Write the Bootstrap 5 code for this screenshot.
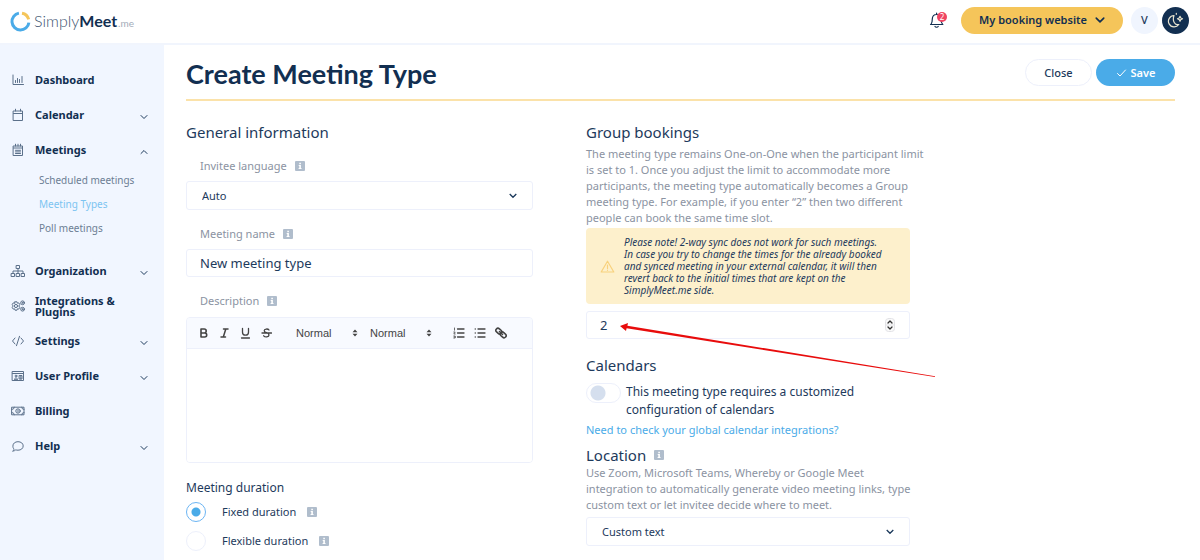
<!DOCTYPE html>
<html lang="en">
<head>
<meta charset="utf-8">
<meta name="viewport" content="width=device-width, initial-scale=1">
<title>Create Meeting Type</title>
<link href="https://cdn.jsdelivr.net/npm/bootstrap@5.3.0/dist/css/bootstrap.min.css" rel="stylesheet">
<style>
  :root { --ink: #1d3a5c; --navy: #122f51; --muted: #8b93a2; --line: #edf0fb; --sky: #4aabe8; --mist: #f1f6ff; }
  body { font-family: "Noto Sans", sans-serif; font-size: 11px; line-height: 16px; color: var(--ink); background: #fff; }
  svg { display: block; flex: none; }
  button, input, select, textarea { font-family: inherit; }
  .ico { fill: none; stroke: currentColor; stroke-linecap: round; stroke-linejoin: round; }

  .topbar { height: 45px; border-bottom: 2px solid #f1f5fd; padding: 0 11px 3px 10px; }
  .brand { font-family: Lato, sans-serif; font-size: 16px; line-height: 24px; color: #3c536f; font-weight: 300; text-decoration: none; gap: 3px; padding-top: 3px; }
  .brand b { font-weight: 700; color: var(--navy); }
  .brand small { font-size: 10px; font-weight: 400; color: #a3acb9; padding-left: 1px; }
  .pill { height: 27px; border-radius: 14px; font-size: 11px; font-weight: 600; line-height: 16px; padding: 0; }
  .pill-site { background: #f5c55a; color: var(--navy); width: 162px; }
  .pill-site:hover { background: #eebb48; }
  .pill-close { width: 67px; border: 1px solid var(--line); color: var(--ink); font-weight: 500; }
  .pill-save { width: 79px; background: var(--sky); color: #fff; }
  .head-actions { margin-top: 2px; }
  .round { width: 27px; height: 27px; border-radius: 50%; border: 0; padding: 0; font-size: 11px; font-weight: 500; background: #f0f5fe; color: var(--ink); }
  .round-dark { background: #122f51; color: #e8e4d0; }
  .bell { width: 16px; border: 0; background: none; padding: 0; color: var(--navy); }
  .bell-count { top: 0; left: 8px; width: 10px; height: 10px; border-radius: 50%; background: #ef4562; color: #fff; font-size: 8px; line-height: 10px; }

  .side { width: 164px; background: var(--mist); padding: 18px 16px 0 10px; }
  .side-link { height: 35px; color: var(--navy); font-weight: 700; font-size: 11px; line-height: 11px; text-decoration: none; gap: 9px; padding-bottom: 2px; }
  .side-link .ico { color: #5b708a; }
  .side-link .caret { color: var(--ink); margin-top: 4px; }
  .sub { padding-bottom: 14px; font-size: 10px; }
  .sub a { display: block; color: #6c7e94; line-height: 24px; padding-left: 29px; text-decoration: none; }
  .sub a.current { color: #7cc4f1; }

  .page { padding: 12px 25px 0 22px; }
  .page-head { height: 44px; border-bottom: 2px solid #fbe2a9; }
  .page-title { font-family: Lato, sans-serif; font-weight: 700; font-size: 27px; line-height: 34px; color: var(--navy); }
  .form-cols { display: grid; grid-template-columns: 347fr 324fr 212fr; column-gap: 53px; padding-top: 21px; }
  .sec { font-size: 15px; line-height: 20px; font-weight: 400; margin: 0; color: var(--ink); }
  .hint { color: var(--muted); margin: 0 -6px 0 0; }
  .hint-wide { margin-right: -16px; }
  .lbl { color: var(--muted); padding-left: 14px; gap: 8px; height: 16px; }
  .box { display: block; width: 100%; height: 28px; border: 1px solid var(--line); border-radius: 3px; color: var(--ink); background-color: #fff; padding: 0 13px; font-size: 13px; line-height: 18px; }
  .lbl + .box, .limit { margin-top: 7px; }
  select.box { appearance: none; height: 29px; font-size: 11px; padding: 0 15px;
    background: #fff url("data:image/svg+xml,%3Csvg xmlns='http://www.w3.org/2000/svg' width='8' height='6' fill='none' stroke='%231d3a5c' stroke-width='1.3'%3E%3Cpath d='M.7 1 4 4.300 7.300 1'/%3E%3C/svg%3E") no-repeat right 15px center; }
  input[type=number] { appearance: textfield; -moz-appearance: textfield; }
  input::-webkit-inner-spin-button { appearance: none; -webkit-appearance: none; }
  .spin { right: 15px; top: 7px; }

  .editor { border: 1px solid var(--line); border-radius: 4px; margin-top: 8px; overflow: hidden; }
  .tools { height: 31px; background: #f8faff; border-bottom: 1px solid var(--line); padding: 0 26px 0 11px; color: #444; }
  .tools button { border: 0; background: none; padding: 0; width: 11px; color: #444; }
  .tools select { appearance: none; border: 0; width: 62px; margin-right: 12px; padding: 0; color: #444; font: 500 11px/16px "Liberation Sans", sans-serif;
    background: url("data:image/svg+xml,%3Csvg xmlns='http://www.w3.org/2000/svg' width='6' height='8' fill='%23444'%3E%3Cpath d='M.5 3.300 3 .6 5.500 3.300zM.5 4.700 3 7.400 5.500 4.700z'/%3E%3C/svg%3E") no-repeat right center; }
  .tool-set { gap: 10px; }
  .editor textarea { display: block; width: 100%; height: 113px; border: 0; resize: none; padding: 10px 13px; color: var(--ink); outline: 0; }
  .mid { font-size: 12px; line-height: 18px; }
  .pick { appearance: none; width: 20px; height: 20px; border: 1px solid var(--line); border-radius: 50%; margin: 0 16px 0 0; background: #fff; flex: none; }
  .pick:checked { border-color: #6cb5f3; background: radial-gradient(circle, var(--sky) 0 4px, #fff 5px); }
  .choices { display: grid; gap: 9px; margin-top: 5px; }
  .choices svg { margin-left: 11px; }
  .note { background: #fdf0cc; border-radius: 4px; padding: 8px 26px 8px 14px; gap: 9px; font-size: 10px; line-height: 12px; font-style: italic; margin-top: 2px; }
  .note svg { color: #f8d17c; }
  .toggle-row { gap: 5px; margin-top: 8px; }
  .toggle { appearance: none; width: 35px; height: 20px; border: 1px solid var(--line); border-radius: 10px; background: radial-gradient(circle at 11px 9px, #d5dfee 0 7px, #fff 8px); flex: none; margin: 0; }
  .pointer { left: 34px; top: 11px; pointer-events: none; }
  .more { color: var(--sky); text-decoration: none; margin: 3px 0 7px; }
</style>
</head>
<body class="min-vh-100 d-flex flex-column">
<svg width="0" height="0" class="position-absolute" aria-hidden="true">
  <symbol id="info" viewBox="0 0 10 10"><rect width="10" height="10" rx="1" fill="#b0bdcc"/><path d="M4.300 1.800h1.600v1.400H4.300zM3.700 4.100h2.200v3h.6v1H3.600v-1h.7V5.100h-.6z" fill="#fff"/></symbol>
  <symbol id="down" viewBox="0 0 8 6"><path d="M1 1.500 4 4.500 7 1.500"/></symbol>
  <symbol id="up" viewBox="0 0 8 6"><path d="M1 4.500 4 1.500 7 4.500"/></symbol>
</svg>

<header class="topbar d-flex align-items-center">
  <a class="brand d-flex align-items-center" href="#">
    <svg width="21" height="21" viewBox="0 0 21 21" fill="none" stroke-width="3"><path d="M8.900 2.150A8.500 8.500 0 1 0 18.900 11.600" stroke="#4aabe8"/><path d="M12 2.150A8.500 8.500 0 0 1 18.700 8.300" stroke="#f5c55a"/></svg>
    <span>Simply<b>Meet</b><small>.me</small></span>
  </a>
  <div class="ms-auto d-flex align-items-center">
    <button class="bell position-relative me-3" type="button" aria-label="Notifications">
      <svg class="ico" width="16" height="17" viewBox="0 0 16 17" stroke-width="1.200"><path d="M1.500 12.500h12.400M2 12.300c1.300-1.400 1.300-3 1.300-5.300C3.300 4 5 2.500 7.600 2.500S12 4 12 7c0 2.300.2 3.900 1.600 5.300M7.600 1.200v1.300M6 14.500c.6 1 2.600 1 3.200 0"/></svg>
      <span class="bell-count position-absolute">2</span>
    </button>
    <button class="btn pill pill-site d-flex align-items-center justify-content-center gap-2 me-2" type="button">My booking website
      <svg class="ico" width="10" height="8" viewBox="0 0 8 6" stroke-width="1.300"><use href="#down"/></svg></button>
    <button class="round me-1" type="button">V</button>
    <button class="round round-dark d-flex align-items-center justify-content-center" type="button" aria-label="Dark mode">
      <svg class="ico" width="17" height="17" viewBox="0 0 17 17" stroke-width="1.200"><path d="M7 3.500a5.700 5.700 0 1 0 4.800 9C8 13.500 5 9 7 3.500zM13 4.300l.8 1.700 1.700.8-1.700.8-.8 1.700-.8-1.700-1.700-.8 1.700-.8zM9.300 1.300v1"/></svg></button>
  </div>
</header>

<div class="d-flex flex-grow-1">
  <nav class="side flex-shrink-0">
    <a class="side-link d-flex align-items-center" href="#"><svg class="ico" width="16" height="14" viewBox="0 0 16 14"><path d="M3 2v9.500h10.500M5.500 9.500v-2M7.500 9.500V5.500M9.500 9.500v-3M12 9.500V3.500"/></svg>Dashboard</a>
    <a class="side-link d-flex align-items-center" href="#"><svg class="ico" width="16" height="14" viewBox="0 0 16 14"><path d="M3.500 3h9v9.500h-9zM3.500 5.500h9M5.500 1.200V3M10.500 1.200V3"/></svg>Calendar<svg class="ico caret ms-auto" width="8" height="6"><use href="#down"/></svg></a>
    <a class="side-link d-flex align-items-center" href="#"><svg class="ico" width="16" height="14" viewBox="0 0 16 14"><path d="M3.500 3h9v9.500h-9zM3.500 5h9M5.500 1.200V3M8 1.200V3M10.500 1.200V3M5.500 7.300h5M5.500 8.900h5M5.500 10.500h5"/></svg>Meetings<svg class="ico caret ms-auto" width="8" height="6"><use href="#up"/></svg></a>
    <div class="sub">
      <a href="#">Scheduled meetings</a>
      <a href="#" class="current">Meeting Types</a>
      <a href="#">Poll meetings</a>
    </div>
    <a class="side-link d-flex align-items-center" href="#"><svg class="ico" width="16" height="14" viewBox="0 0 16 14"><path d="M6.500 1.500h3v3h-3zM1.500 9.500h3v3h-3zM6.500 9.500h3v3h-3zM11.500 9.500h3v3h-3zM8 4.500v5M3 9.500V7h10v2.500"/></svg>Organization<svg class="ico caret ms-auto" width="8" height="6"><use href="#down"/></svg></a>
    <a class="side-link d-flex align-items-center" href="#"><svg class="ico" width="16" height="14" viewBox="0 0 16 14"><path d="M5 2.800h2l.4 1.400 1.400-.3 1 1.700-1 1.400 1 1.400-1 1.700-1.400-.3L7 11.200H5l-.4-1.400-1.400.3-1-1.700 1-1.400-1-1.400 1-1.700 1.400.3z"/><circle cx="6" cy="7" r="1.600"/><circle cx="12.600" cy="3.800" r="1.900"/><circle cx="12.600" cy="3.800" r=".5"/><circle cx="12.600" cy="10.200" r="1.900"/><circle cx="12.600" cy="10.200" r=".5"/></svg>Integrations &amp; Plugins</a>
    <a class="side-link d-flex align-items-center" href="#"><svg class="ico" width="16" height="14" viewBox="0 0 16 14"><path d="M5 4 2.500 7 5 10M11 4l2.500 3L11 10M9.500 2.300l-3 9.400"/></svg>Settings<svg class="ico caret ms-auto" width="8" height="6"><use href="#down"/></svg></a>
    <a class="side-link d-flex align-items-center" href="#"><svg class="ico" width="16" height="14" viewBox="0 0 16 14"><path d="M2.500 2.500h11v9h-11zM2.500 4.500h11M4.500 10.300c0-2 3-2 3 0zM9.500 6.500h2.500v3.500H9.500zM10.800 6.500v3.500"/><circle cx="6" cy="7" r=".9"/></svg>User Profile<svg class="ico caret ms-auto" width="8" height="6"><use href="#down"/></svg></a>
    <a class="side-link d-flex align-items-center" href="#"><svg class="ico" width="16" height="14" viewBox="0 0 16 14"><path d="M2 3.200h12v7.600H2zM2 5.500A2.300 2.300 0 0 0 4.300 3.200M14 5.500a2.300 2.300 0 0 1-2.300-2.300M2 8.500a2.300 2.300 0 0 1 2.300 2.300M14 8.500a2.300 2.300 0 0 0-2.300 2.300M8 6v2"/><circle cx="8" cy="7" r="2.200"/></svg>Billing</a>
    <a class="side-link d-flex align-items-center" href="#"><svg class="ico" width="16" height="14" viewBox="0 0 16 14"><path d="M3 12c.9-.8 1-1.300 1-2C3 9 2.900 8 2.900 7c0-2.600 2.200-4.300 5.100-4.300S13.200 4.400 13.200 6.900 11 11.200 8 11.200c-.9 0-1.500-.1-2.200-.4C5 11.500 4.200 12 3 12z"/></svg>Help<svg class="ico caret ms-auto" width="8" height="6"><use href="#down"/></svg></a>
  </nav>

  <main class="page flex-grow-1">
    <div class="page-head d-flex align-items-start">
      <h1 class="page-title m-0">Create Meeting Type</h1>
      <div class="head-actions ms-auto d-flex gap-1">
        <button class="btn pill pill-close" type="button">Close</button>
        <button class="btn pill pill-save d-flex align-items-center justify-content-center gap-1" type="button"><svg class="ico" width="11" height="10" viewBox="0 0 11 10"><path d="M1.500 5.500 4 8 9.500 2"/></svg>Save</button>
      </div>
    </div>

    <form class="form-cols">
      <div>
        <h2 class="sec mb-3">General information</h2>
        <label class="lbl d-flex align-items-center" for="lang">Invitee language<svg width="10" height="10"><use href="#info"/></svg></label>
        <select class="box mb-3" id="lang"><option>Auto</option></select>
        <label class="lbl d-flex align-items-center" for="mname">Meeting name<svg width="10" height="10"><use href="#info"/></svg></label>
        <input class="box mb-3" id="mname" type="text" value="New meeting type">
        <label class="lbl d-flex align-items-center" for="desc">Description<svg width="10" height="10"><use href="#info"/></svg></label>
        <div class="editor">
          <div class="tools d-flex align-items-center">
            <div class="tool-set d-flex me-4">
              <button type="button" aria-label="Bold"><svg class="ico" width="11" height="12" viewBox="0 0 11 12" stroke-width="1.600"><path d="M3 2h3.200a2 2 0 0 1 0 4H3zM3 6h3.700a2 2 0 0 1 0 4H3z"/></svg></button>
              <button type="button" aria-label="Italic"><svg class="ico" width="11" height="12" viewBox="0 0 11 12" stroke-width="1.500"><path d="M4.500 2H9M2 10h4.500M6.800 2 4.300 10"/></svg></button>
              <button type="button" aria-label="Underline"><svg class="ico" width="11" height="12" viewBox="0 0 11 12" stroke-width="1.300"><path d="M2.500 1.500v3.700a3 3 0 0 0 6 0V1.500M1.500 11h8"/></svg></button>
              <button type="button" aria-label="Strikethrough"><svg class="ico" width="11" height="12" viewBox="0 0 11 12" stroke-width="1.300"><path d="M8 3C7 1.500 3.200 1.700 3.200 3.700 3.200 6.300 8 5 8 8c0 2.300-4 2.500-5.300.8M1 6h9.500"/></svg></button>
            </div>
            <select aria-label="Size"><option>Normal</option></select>
            <select aria-label="Heading"><option>Normal</option></select>
            <div class="tool-set d-flex ms-auto">
              <button type="button" aria-label="Ordered list"><svg class="ico" width="12" height="12" viewBox="0 0 12 12" stroke-width="1.300"><path d="M4.500 2h6.500M4.500 6h6.500M4.500 10h6.500"/><path d="M1.500 1v2.200M.8 5h1.400L.8 7h1.400M.8 9h1.400v2H.8M1.200 10h1" stroke-width=".8"/></svg></button>
              <button type="button" aria-label="Bullet list"><svg class="ico" width="12" height="12" viewBox="0 0 12 12" stroke-width="1.300"><path d="M4 2h7M4 6h7M4 10h7M1.200 2h.1M1.200 6h.1M1.200 10h.1"/></svg></button>
              <button type="button" aria-label="Link"><svg class="ico" width="12" height="12" viewBox="0 0 12 12" stroke-width="1.600"><rect x=".6" y="2" width="6.400" height="4.200" rx="2.100" transform="rotate(42 3.800 4.100)"/><rect x="5" y="5.800" width="6.400" height="4.200" rx="2.100" transform="rotate(42 8.200 7.900)"/><path d="M4.500 4.500l3 3"/></svg></button>
            </div>
          </div>
          <textarea id="desc"></textarea>
        </div>
        <h3 class="mid fw-normal mt-3 mb-0">Meeting duration</h3>
        <div class="choices">
          <div class="d-flex align-items-center">
            <input class="pick" type="radio" name="dur" id="fixed" checked><label for="fixed">Fixed duration</label><svg width="10" height="10"><use href="#info"/></svg>
          </div>
          <div class="d-flex align-items-center">
            <input class="pick" type="radio" name="dur" id="flex"><label for="flex">Flexible duration</label><svg width="10" height="10"><use href="#info"/></svg>
          </div>
        </div>
      </div>

      <div>
        <h2 class="sec mb-1">Group bookings</h2>
        <p class="hint hint-wide">The meeting type remains One-on-One when the participant limit is set to 1. Once you adjust the limit to accommodate more participants, the meeting type automatically becomes a Group meeting type. For example, if you enter “2” then two different people can book the same time slot.</p>
        <div class="note d-flex align-items-center">
          <svg class="ico" width="15" height="13" viewBox="0 0 15 13" stroke-width="1.200"><path d="M7.500 1.200 13.800 12H1.200zM7.500 5v3.500M7.500 10.200v.1"/></svg>
          <span>Please note! 2-way sync does not work for such meetings. In case you try to change the times for the already booked and synced meeting in your external calendar, it will then revert back to the initial times that are kept on the SimplyMeet.me side.</span>
        </div>
        <div class="limit position-relative mb-3">
          <input class="box" type="number" value="2" aria-label="Participant limit">
          <svg class="spin ico position-absolute" width="10" height="14" viewBox="0 0 10 14"><rect x=".5" y=".5" width="9" height="13" rx="3" stroke="#e2e2e6" fill="#fafafa"/><path d="M.5 7h9" stroke="#e2e2e6"/><path d="M3 5 5 3l2 2M3 9l2 2 2-2" stroke="#333" stroke-width="1.300"/></svg>
          <svg class="pointer position-absolute" width="316" height="56" viewBox="0 0 316 56"><path d="M0 4 8 1 7.400 3.800 315 54.200v.8L6.600 6.200 6 9z" fill="#e80c0c"/></svg>
        </div>
        <h2 class="sec">Calendars</h2>
        <div class="toggle-row d-flex">
          <input class="toggle" type="checkbox" role="switch" id="cust"><label class="mid" for="cust">This meeting type requires a customized configuration of calendars</label>
        </div>
        <a class="more d-block" href="#">Need to check your global calendar integrations?</a>
        <h2 class="sec d-flex align-items-center gap-2">Location<svg width="10" height="10"><use href="#info"/></svg></h2>
        <p class="hint">Use Zoom, Microsoft Teams, Whereby or Google Meet integration to automatically generate video meeting links, type custom text or let invitee decide where to meet.</p>
        <select class="box mt-1" aria-label="Location"><option>Custom text</option></select>
      </div>
    </form>
  </main>
</div>
<script src="https://cdn.jsdelivr.net/npm/bootstrap@5.3.0/dist/js/bootstrap.bundle.min.js"></script>
</body>
</html>
